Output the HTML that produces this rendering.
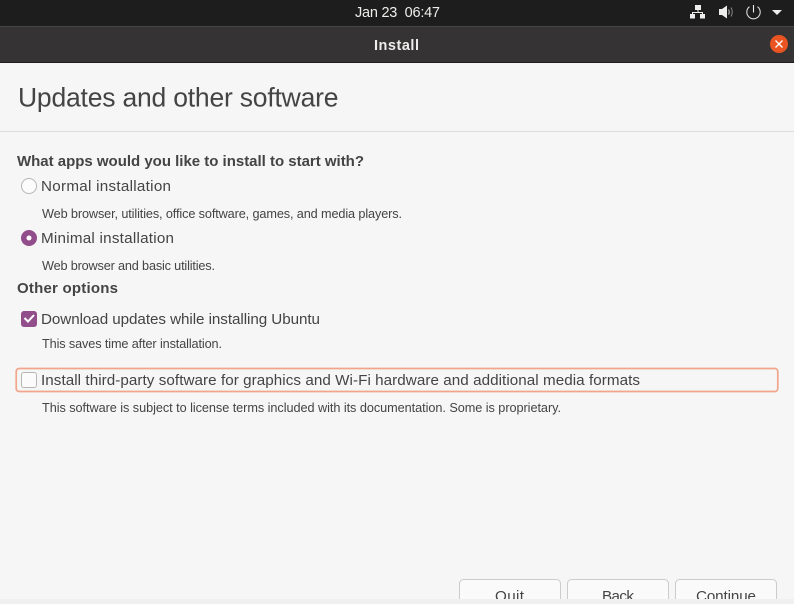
<!DOCTYPE html>
<html><head><meta charset="utf-8"><title>Install</title>
<style>
html,body{margin:0;padding:0;width:794px;height:604px;overflow:hidden;background:#f6f6f6}
svg{display:block}
text{font-family:"Liberation Sans",sans-serif;fill:#454444}
.b{font-weight:bold}
.bm{font-size:15px}
.m{font-size:15.2px}
.s{font-size:12.7px}
</style></head>
<body>
<svg width="794" height="604" viewBox="0 0 794 604" xmlns="http://www.w3.org/2000/svg">
<rect width="794" height="604" fill="#f6f6f6"/>
<rect width="794" height="26" fill="#1d1d1d"/>
<rect y="26" width="794" height="1" fill="#474646"/>
<rect y="27" width="794" height="35" fill="#353333"/>
<rect y="62" width="794" height="1" fill="#1f1e1e"/>
<text x="355" y="17" font-size="14.500" textLength="85" lengthAdjust="spacing" xml:space="preserve" style="fill:#eeeeec">Jan 23  06:47</text>
<text x="374" y="50" class="b" font-size="14.500" textLength="45" lengthAdjust="spacing" style="fill:#eeeeec">Install</text>
<!-- network -->
<g fill="#eeeeec">
<rect x="695" y="5" width="6" height="5"/>
<rect x="690" y="14" width="5" height="4.500"/>
<rect x="700" y="14" width="5" height="4.500"/>
</g>
<path d="M698 10v2.500M692.500 14v-1.500h10v1.500" fill="none" stroke="#eeeeec" stroke-width="1"/>
<!-- volume -->
<path d="M719 9h3l5-3.500v13l-5-3.500h-3z" fill="#eeeeec"/>
<path d="M728.500 9.500q1.500 2.500 0 5" fill="none" stroke="#b0b0b0" stroke-width="1.200"/>
<path d="M731 7.500q2.500 4.500 0 9" fill="none" stroke="#8a8a8a" stroke-width="1"/>
<!-- power -->
<path d="M749.500 6.700a6.700 6.700 0 1 0 8 0" fill="none" stroke="#d8d8d8" stroke-width="1.100"/>
<path d="M753.500 5v7.500" fill="none" stroke="#eeeeec" stroke-width="1.100"/>
<!-- arrow -->
<path d="M772 10h10l-5 5z" fill="#eeeeec"/>
<!-- close -->
<circle cx="779" cy="44" r="9" fill="#e95420"/>
<path d="M775.500 40.500l7 7M782.500 40.500l-7 7" stroke="#fff" stroke-width="1.300"/>
<!-- heading -->
<text x="18" y="106.500" font-size="26.500" textLength="320.500" lengthAdjust="spacing">Updates and other software</text>
<rect y="131" width="794" height="1" fill="#dddcdc"/>
<text x="17" y="166" class="b bm" textLength="347" lengthAdjust="spacing">What apps would you like to install to start with?</text>
<!-- normal radio -->
<circle cx="29" cy="186" r="7.500" fill="#fcfcfc" stroke="#b6b6b3" stroke-width="1"/>
<text x="41" y="191" class="m" textLength="130" lengthAdjust="spacing">Normal installation</text>
<text x="42" y="218" class="s" textLength="360" lengthAdjust="spacing">Web browser, utilities, office software, games, and media players.</text>
<!-- minimal radio -->
<circle cx="29" cy="238" r="8" fill="#924d8b"/>
<circle cx="29" cy="238" r="2.500" fill="#fff"/>
<text x="41" y="243" class="m" textLength="133" lengthAdjust="spacing">Minimal installation</text>
<text x="42" y="270" class="s" textLength="173" lengthAdjust="spacing">Web browser and basic utilities.</text>
<text x="17" y="293" class="b bm" textLength="101" lengthAdjust="spacing">Other options</text>
<!-- download checkbox -->
<rect x="21" y="311" width="16" height="16" rx="3" fill="#924d8b"/>
<path d="M24.500 318l3.500 3.500 6-6.500" fill="none" stroke="#fff" stroke-width="2"/>
<text x="41" y="324" class="m" textLength="279" lengthAdjust="spacing">Download updates while installing Ubuntu</text>
<text x="42" y="348" class="s" textLength="180" lengthAdjust="spacing">This saves time after installation.</text>
<!-- third-party focus -->
<rect x="16.200" y="368.500" width="761.600" height="23" rx="3" fill="#f6f6f6" stroke="#f2a58c" stroke-width="1.700"/>
<rect x="21.500" y="372.500" width="15" height="15" rx="2.500" fill="#fbfbfb" stroke="#b6b6b3"/>
<text x="41" y="385" class="m" textLength="599" lengthAdjust="spacing">Install third-party software for graphics and Wi-Fi hardware and additional media formats</text>
<text x="42" y="412" class="s" textLength="519" lengthAdjust="spacing">This software is subject to license terms included with its documentation. Some is proprietary.</text>
<!-- buttons -->
<rect x="459.500" y="579.500" width="101" height="34" rx="4" fill="#fafafa" stroke="#cdccca"/>
<rect x="567.500" y="579.500" width="101" height="34" rx="4" fill="#fafafa" stroke="#cdccca"/>
<rect x="675.500" y="579.500" width="101" height="34" rx="4" fill="#fafafa" stroke="#cdccca"/>
<text x="495" y="601" class="m" textLength="29" lengthAdjust="spacing">Quit</text>
<text x="602" y="601" class="m" textLength="32" lengthAdjust="spacing">Back</text>
<text x="696" y="601" class="m" textLength="60" lengthAdjust="spacing">Continue</text>
<rect y="599" width="794" height="5" fill="#f0f0f0"/>
</svg>
</body></html>
